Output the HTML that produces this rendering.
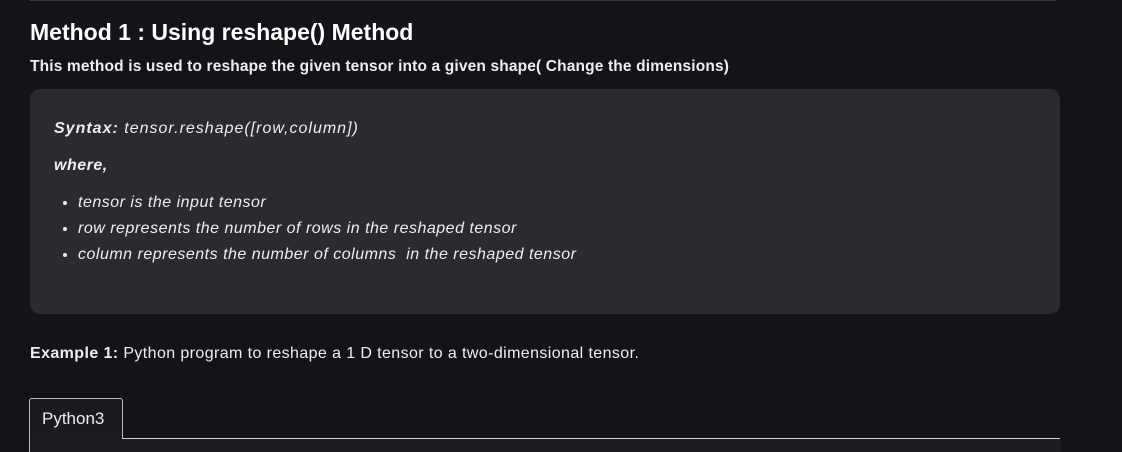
<!DOCTYPE html><html><head><style>
body{margin:0;background:#131417;width:1122px;height:452px;overflow:hidden;font-family:"Liberation Sans",sans-serif;color:#fff;position:relative}
.top{position:absolute;left:30px;top:0;width:1026px;height:1px;background:#3a3b3e}
h1{position:absolute;left:30px;top:19px;margin:0;font-size:23px;font-weight:bold;letter-spacing:0}
.p{position:absolute;left:30px;top:58px;font-size:15.5px;font-weight:bold;color:#eee;letter-spacing:0.15px}
.box{position:absolute;left:30px;top:89px;width:1030px;height:225px;background:#2a2b2e;border-radius:10px}
.box div,.box li{font-style:italic;font-size:16px;color:#eee;letter-spacing:0.5px}
.ex{position:absolute;left:30px;top:345px;font-size:16px;color:#eee;letter-spacing:0.4px}
.tab{position:absolute;left:29px;top:398px;width:92px;height:40px;border:1px solid #bbb;border-bottom:none;border-radius:3px 3px 0 0;background:#1a1b1e}
.tab span{position:absolute;left:12px;top:10px;font-size:17px;color:#eee}
.line{position:absolute;left:122px;top:438px;width:938px;height:1px;background:#ccc}
.below{position:absolute;left:29px;top:439px;width:1031px;height:13px;background:#1c1d20;border-left:1px solid #bbb}
</style></head><body>
<div class="top"></div>
<h1>Method 1 : Using reshape() Method</h1>
<div class="p">This method is used to reshape the given tensor into a given shape( Change the dimensions)</div>
<div class="box">
<div style="position:absolute;left:24px;top:31px;letter-spacing:1px"><b>Syntax:</b> tensor.reshape([row,column])</div>
<div style="position:absolute;left:24px;top:68px"><b>where,</b></div>
<ul style="position:absolute;left:24px;top:101px;margin:0;padding-left:24px;line-height:26px">
<li>tensor is the input tensor</li>
<li>row represents the number of rows in the reshaped tensor</li>
<li>column represents the number of columns&nbsp; in the reshaped tensor</li>
</ul></div>
<div class="ex"><b>Example 1:</b> Python program to reshape a 1 D tensor to a two-dimensional tensor.</div>
<div class="tab"><span>Python3</span></div>
<div class="line"></div>
<div class="below"></div>
</body></html>
